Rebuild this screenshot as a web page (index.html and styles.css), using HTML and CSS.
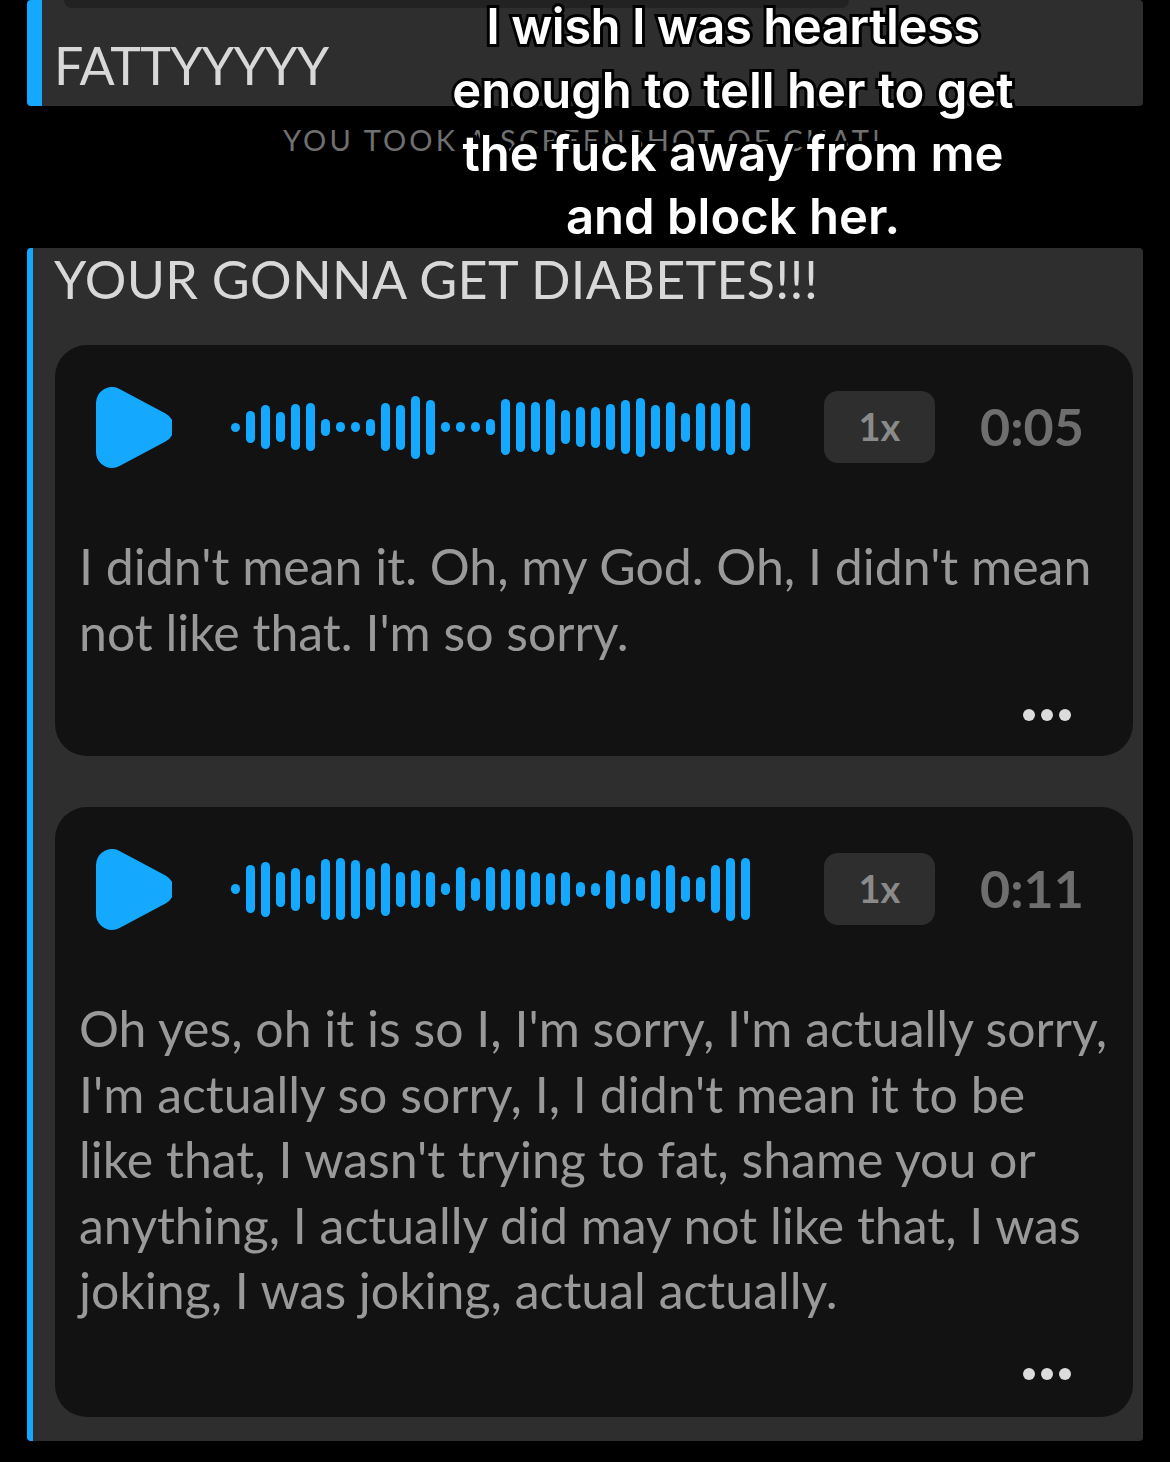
FILE: index.html
```html
<!DOCTYPE html>
<html lang="en">
<head>
  <meta charset="UTF-8" />
  <title>Chat</title>
  <link rel="stylesheet" href="styles.css">
</head>
<body>
  <div class="chat">
    <div class="message message-first">
      <div class="stub"></div>
      <p class="message-text">FATTYYYYY</p>
    </div>

    <p class="notice">YOU TOOK A SCREENSHOT OF CHAT!</p>

    <div class="message message-second">
      <p class="message-text">YOUR GONNA GET DIABETES!!!</p>

      <div class="voice-card">
        <div class="player">
          <svg class="play-icon" viewBox="0 0 76 81"><path d="M16 16 L16 65 L62 40.5 Z" /></svg>
          <div class="wave">
            <span style="height:9px"></span><span style="height:32px"></span><span style="height:44px"></span><span style="height:30px"></span><span style="height:46px"></span><span style="height:48px"></span><span style="height:17px"></span><span style="height:10px"></span><span style="height:10px"></span><span style="height:17px"></span><span style="height:48px"></span><span style="height:45px"></span><span style="height:63px"></span><span style="height:55px"></span><span style="height:10px"></span><span style="height:10px"></span><span style="height:10px"></span><span style="height:16px"></span><span style="height:56px"></span><span style="height:50px"></span><span style="height:50px"></span><span style="height:56px"></span><span style="height:34px"></span><span style="height:40px"></span><span style="height:41px"></span><span style="height:46px"></span><span style="height:54px"></span><span style="height:59px"></span><span style="height:44px"></span><span style="height:50px"></span><span style="height:29px"></span><span style="height:48px"></span><span style="height:48px"></span><span style="height:56px"></span><span style="height:48px"></span>
          </div>
          <div class="speed">1x</div>
          <div class="time">0:05</div>
        </div>
        <p class="transcript">I didn't mean it. Oh, my God. Oh, I didn't mean<br>not like that. I'm so sorry.</p>
        <div class="more"><i></i><i></i><i></i></div>
      </div>

      <div class="voice-card">
        <div class="player">
          <svg class="play-icon" viewBox="0 0 76 81"><path d="M16 16 L16 65 L62 40.5 Z" /></svg>
          <div class="wave">
            <span style="height:10px"></span><span style="height:48px"></span><span style="height:55px"></span><span style="height:35px"></span><span style="height:43px"></span><span style="height:29px"></span><span style="height:61px"></span><span style="height:62px"></span><span style="height:59px"></span><span style="height:42px"></span><span style="height:53px"></span><span style="height:35px"></span><span style="height:38px"></span><span style="height:35px"></span><span style="height:12px"></span><span style="height:44px"></span><span style="height:23px"></span><span style="height:44px"></span><span style="height:41px"></span><span style="height:41px"></span><span style="height:35px"></span><span style="height:32px"></span><span style="height:34px"></span><span style="height:15px"></span><span style="height:13px"></span><span style="height:39px"></span><span style="height:30px"></span><span style="height:24px"></span><span style="height:39px"></span><span style="height:48px"></span><span style="height:26px"></span><span style="height:25px"></span><span style="height:48px"></span><span style="height:63px"></span><span style="height:62px"></span>
          </div>
          <div class="speed">1x</div>
          <div class="time">0:11</div>
        </div>
        <p class="transcript">Oh yes, oh it is so I, I'm sorry, I'm actually sorry,<br>I'm actually so sorry, I, I didn't mean it to be<br>like that, I wasn't trying to fat, shame you or<br>anything, I actually did may not like that, I was<br>joking, I was joking, actual actually.</p>
        <div class="more"><i></i><i></i><i></i></div>
      </div>
    </div>

    <p class="caption"><span class="caption-first">I wish I was heartless</span>enough to tell her to get<br>the fuck away from me<br>and block her.</p>
  </div>
</body>
</html>
```

FILE: styles.css
```css
* {
  margin: 0;
  padding: 0;
  box-sizing: border-box;
}

body {
  background: #000;
  font-family: 'Lato', 'Open Sans', sans-serif;
  height: 1462px;
  overflow: hidden;
}

.chat {
  position: relative;
  padding: 0 27px;
}

.message {
  background: #2e2e2e;
  border-radius: 4px;
}

.message-first {
  height: 106px;
  border-left: 15px solid #14a8ff;
  padding: 0 10px 0 12px;
}

.stub {
  height: 8px;
  width: 785px;
  margin-left: 10px;
  background: #222;
  border-radius: 0 0 24px 24px;
}

.message-text {
  color: #d8d8d8;
  font-size: 52px;
  line-height: 62px;
}

.message-first .message-text {
  margin-top: 26px;
  letter-spacing: -0.8px;
}

.notice {
  color: #707070;
  font-size: 29px;
  letter-spacing: 3.15px;
  line-height: 36px;
  text-align: center;
  margin-top: 16px;
  height: 126px;
  padding-right: 4px;
}

.message-second {
  border-left: 6px solid #14a8ff;
  padding: 0 10px 24px 22px;
}

.message-second .message-text {
  margin-left: -1px;
  letter-spacing: 0.3px;
}

.voice-card {
  background: #121212;
  border-radius: 32px;
  margin-top: 35px;
  padding: 0 30px 0 24px;
}

.voice-card + .voice-card {
  margin-top: 51px;
}

.player {
  display: flex;
  align-items: center;
  height: 164px;
  padding-left: 17px;
}

.play-icon {
  width: 76px;
  height: 81px;
  flex-shrink: 0;
}

.play-icon path {
  fill: #14a8ff;
  stroke: #14a8ff;
  stroke-width: 32;
  stroke-linejoin: round;
}

.wave {
  display: flex;
  align-items: center;
  gap: 6px;
  margin-left: 59px;
}

.wave span {
  width: 9px;
  border-radius: 5px;
  background: #14a8ff;
}

.speed {
  width: 111px;
  height: 72px;
  margin-left: 74px;
  border-radius: 14px;
  background: #2e2e2e;
  color: #8a8a8a;
  font-size: 38px;
  font-weight: 700;
  line-height: 71px;
  text-align: center;
}

.time {
  margin-left: 45px;
  margin-top: -2px;
  color: #6e6e6e;
  font-size: 52px;
  font-weight: 700;
}

.transcript {
  color: #999;
  font-size: 50px;
  line-height: 65.5px;
  margin-top: 25px;
  white-space: nowrap;
}

.more {
  display: flex;
  justify-content: flex-end;
  gap: 6px;
  padding: 0 32px 35px 0;
  margin-top: 44px;
}

.voice-card + .voice-card .more {
  padding-bottom: 37px;
}

.more i {
  width: 12px;
  height: 12px;
  border-radius: 50%;
  background: #dcdcdc;
}

.caption {
  position: absolute;
  top: 0;
  left: 0;
  width: 1170px;
  padding-left: 296px;
  color: #fff;
  font-family: 'Inter', sans-serif;
  font-size: 49px;
  font-weight: 600;
  line-height: 63px;
  text-align: center;
  -webkit-text-stroke: 6px #000;
  paint-order: stroke fill;
}

.caption-first {
  display: block;
  line-height: 54px;
  margin-bottom: 5px;
  letter-spacing: -0.5px;
}
```
